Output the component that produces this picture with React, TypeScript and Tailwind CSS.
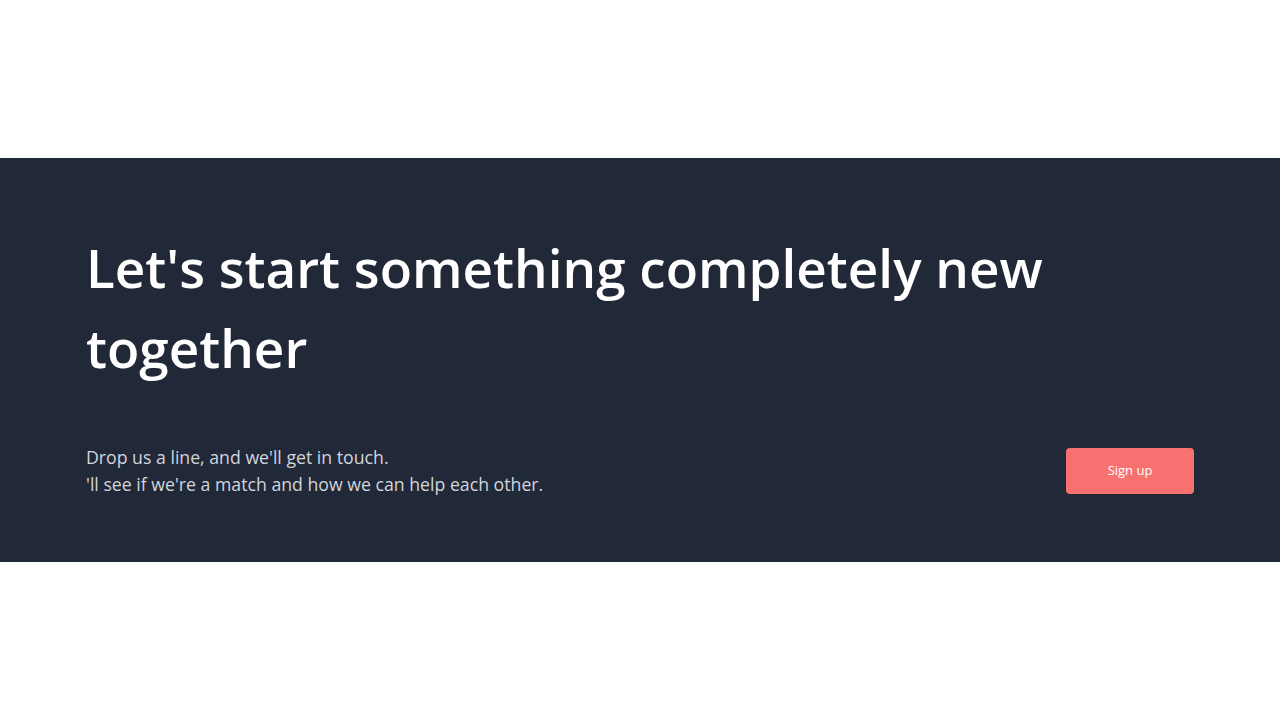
export default function App() {
  return (
    <div className="flex min-h-screen flex-col justify-center bg-white font-['Open_Sans',sans-serif]">
      <section className="bg-[#212838] px-[86px] pb-[64px] pt-[70px]">
        <h2 className="max-w-[1000px] text-[53px] font-semibold leading-[80px] text-white">
          Let's start something completely new together
        </h2>
        <div className="mt-[56px] flex items-center justify-between">
          <p className="text-[17.7px] leading-[27px] text-gray-300">
            Drop us a line, and we'll get in touch.
            <br />
            'll see if we're a match and how we can help each other.
          </p>
          <button className="h-[46px] w-[128px] rounded bg-[#f87171] text-[13px] text-white">
            Sign up
          </button>
        </div>
      </section>
    </div>
  );
}
